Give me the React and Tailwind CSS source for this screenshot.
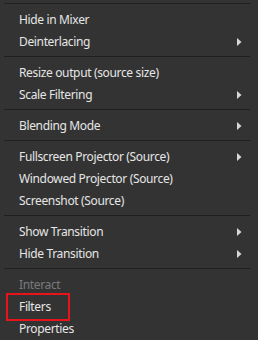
import React from 'react';

const items = [
  { sep: true },
  { label: 'Hide in Mixer' },
  { label: 'Deinterlacing', sub: true },
  { sep: true },
  { label: 'Resize output (source size)' },
  { label: 'Scale Filtering', sub: true },
  { sep: true },
  { label: 'Blending Mode', sub: true },
  { sep: true },
  { label: 'Fullscreen Projector (Source)', sub: true },
  { label: 'Windowed Projector (Source)' },
  { label: 'Screenshot (Source)' },
  { sep: true },
  { label: 'Show Transition', sub: true },
  { label: 'Hide Transition', sub: true },
  { sep: true },
  { label: 'Interact', disabled: true },
  { label: 'Filters', marked: true },
  { label: 'Properties' },
];

const Arrow = () => (
  <svg width="5" height="8" viewBox="0 0 5 8" className="absolute right-[16px] top-[7px]">
    <path d="M0 0 L4.5 4 L0 8 Z" fill="#d8d8d8" />
  </svg>
);

const MenuItem = ({ item }) => {
  if (item.sep) {
    return (
      <div className="h-[9px] pt-[3px] pl-[4px] pr-[8px]">
        <div className="h-px bg-[#1f1f1f]" />
      </div>
    );
  }
  return (
    <div className="relative h-[22px] flex items-center pl-[19px]">
      <span className={item.disabled ? 'text-[#7a7a7a]' : 'text-[#e6e6e6]'}>{item.label}</span>
      {item.sub && <Arrow />}
      {/* red highlight box drawn over the Filters entry */}
      {item.marked && (
        <div className="absolute left-[6px] top-[-3px] w-[64px] h-[28px] border-2 border-[#e8141c]" />
      )}
    </div>
  );
};

export default function App() {
  return (
    <div
      className="w-[258px] h-[340px] overflow-hidden bg-[#333333] text-[12px] leading-none tracking-[-0.35px]"
      style={{ fontFamily: '"Noto Sans", "Open Sans", sans-serif' }}
    >
      {items.map((item, i) => (
        <MenuItem key={i} item={item} />
      ))}
    </div>
  );
}
